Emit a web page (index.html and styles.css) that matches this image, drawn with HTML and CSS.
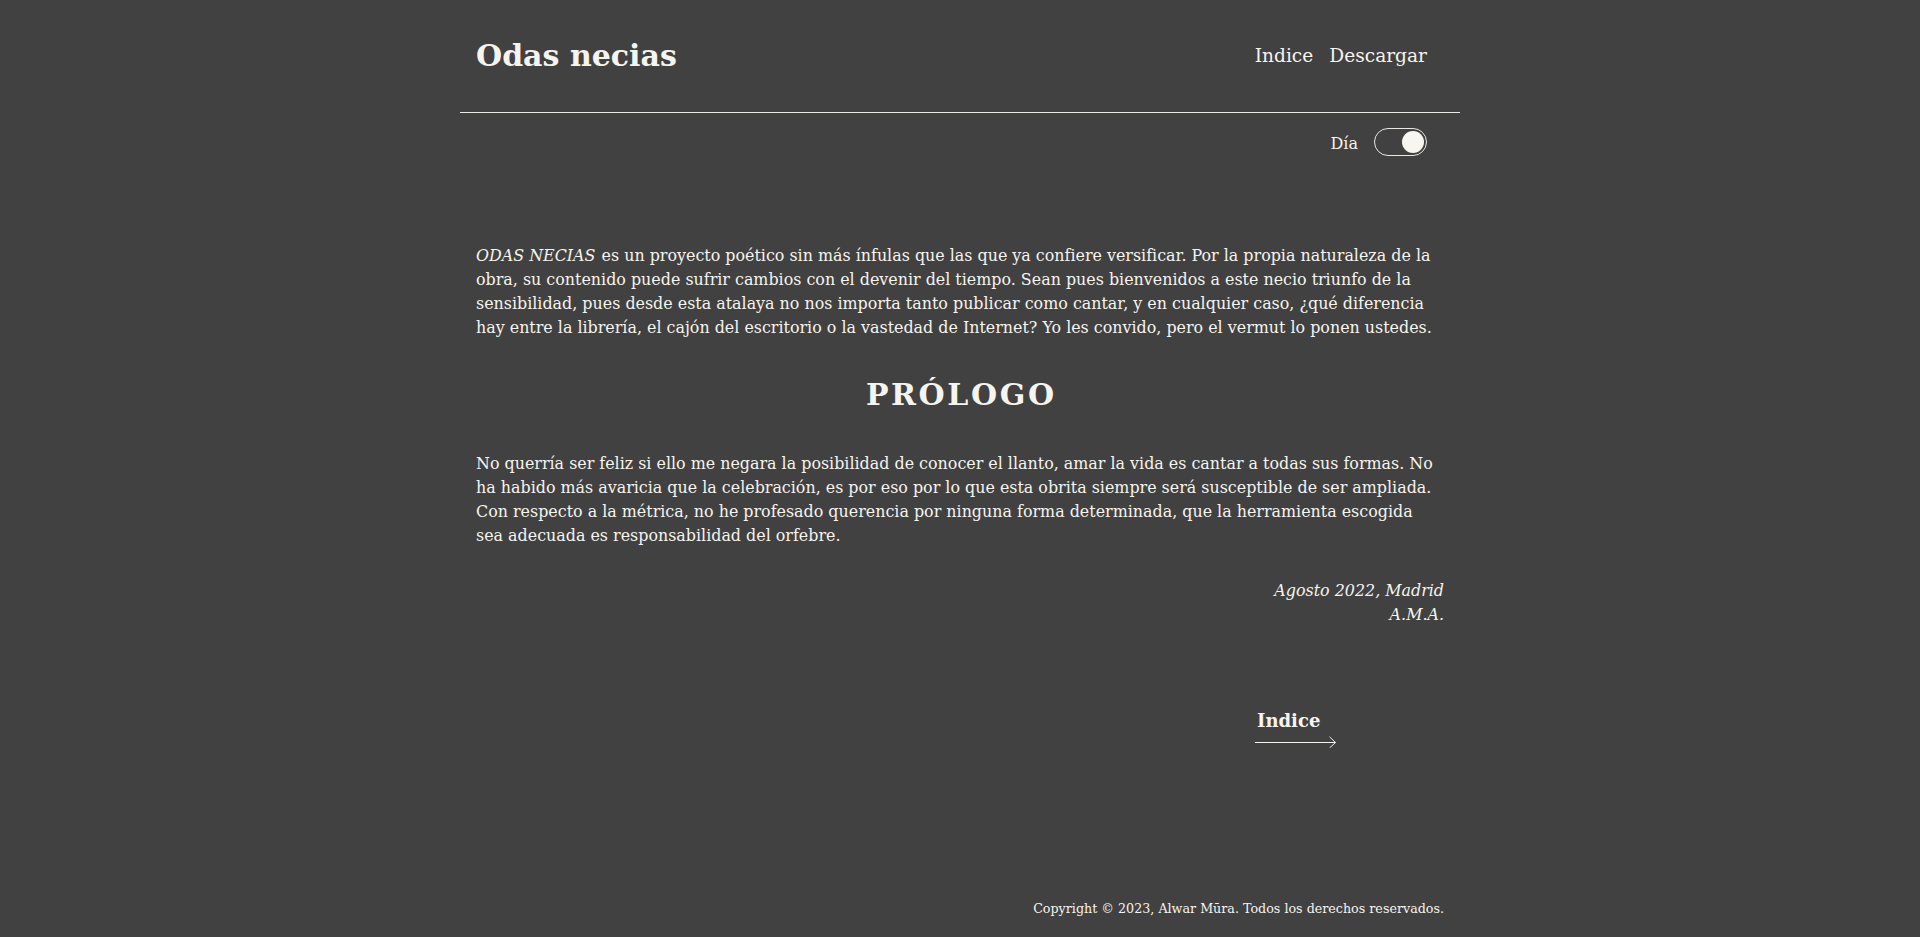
FILE: index.html
```html
<!DOCTYPE html>
<html lang="es">
<head>
<meta charset="utf-8">
<title>Odas necias</title>
<link rel="stylesheet" href="styles.css">
</head>
<body>
<div class="page">
  <header class="site-header">
    <h1 class="site-title">Odas necias</h1>
    <nav class="site-nav">
      <a href="#" class="nav-link">Indice</a>
      <a href="#" class="nav-link">Descargar</a>
    </nav>
  </header>
  <div class="theme-row">
    <span class="theme-label">Día</span>
    <span class="toggle"><span class="toggle-knob"></span></span>
  </div>
  <main class="content">
    <p class="intro"><em class="work-name">ODAS NECIAS</em> es un proyecto poético sin más ínfulas que las que ya confiere versificar. Por la propia naturaleza de la obra, su contenido puede sufrir cambios con el devenir del tiempo. Sean pues bienvenidos a este necio triunfo de la sensibilidad, pues desde esta atalaya no nos importa tanto publicar como cantar, y en cualquier caso, ¿qué diferencia hay entre la librería, el cajón del escritorio o la vastedad de Internet? Yo les convido, pero el vermut lo ponen ustedes.</p>
    <h2 class="section-title">PRÓLOGO</h2>
    <p class="prologue">No querría ser feliz si ello me negara la posibilidad de conocer el llanto, amar la vida es cantar a todas sus formas. No ha habido más avaricia que la celebración, es por eso por lo que esta obrita siempre será susceptible de ser ampliada. Con respecto a la métrica, no he profesado querencia por ninguna forma determinada, que la herramienta escogida sea adecuada es responsabilidad del orfebre.</p>
    <p class="signature">Agosto 2022, Madrid<br>A.M.A.</p>
    <div class="pager">
      <a href="#" class="next-link">
        <span class="next-text">Indice</span>
        <svg class="next-arrow" width="82" height="12" viewBox="0 0 82 12"><path d="M0 6.5 H80.5 M74.5 0.8 L80.5 6.5 L74.5 12" fill="none" stroke="#f4f2ec" stroke-width="1"/></svg>
      </a>
    </div>
  </main>
  <footer class="site-footer">Copyright © 2023, Alwar Mūra. Todos los derechos reservados.</footer>
</div>
</body>
</html>
```
FILE: styles.css
```css
html, body {
  margin: 0;
  padding: 0;
}
body {
  background: #414141;
  color: #f6f4ee;
  font-family: "DejaVu Serif", "Liberation Serif", serif;
}
.page {
  width: 1000px;
  margin: 0 auto;
  min-height: 100vh;
  display: flex;
  flex-direction: column;
}
.site-header {
  display: flex;
  justify-content: space-between;
  align-items: flex-start;
  height: 112px;
  padding: 0 33px 0 16px;
  border-bottom: 1px solid #ecebe6;
}
.site-title {
  margin: 38px 0 0;
  font-size: 30px;
  line-height: 36px;
  font-weight: bold;
}
.site-nav {
  display: flex;
  gap: 16px;
  margin-top: 44px;
}
.nav-link {
  color: #f6f4ee;
  text-decoration: none;
  font-size: 18.6px;
  line-height: 24px;
}
.theme-row {
  display: flex;
  justify-content: flex-end;
  align-items: center;
  gap: 16px;
  margin-top: 14px;
  padding-right: 33px;
}
.theme-label {
  font-size: 16px;
  line-height: 24px;
  padding-top: 5px;
}
.toggle {
  box-sizing: border-box;
  width: 53px;
  height: 28px;
  border: 1.5px solid #e9e8e3;
  border-radius: 14px;
  display: flex;
  align-items: center;
  justify-content: flex-end;
  padding-right: 2px;
}
.toggle-knob {
  width: 22px;
  height: 22px;
  border-radius: 50%;
  background: #f7f6f1;
}
.content {
  padding: 0 16px;
}
.intro, .prologue {
  margin: 0;
  font-size: 15.9px;
  line-height: 24px;
}
.intro {
  margin-top: 88px;
}
.work-name {
  padding-right: 1px;
}
.section-title {
  margin: 37px 0 0;
  text-align: center;
  font-size: 30px;
  line-height: 36px;
  font-weight: bold;
  letter-spacing: 2.6px;
  text-indent: 2.6px;
}
.prologue {
  margin-top: 39px;
}
.signature {
  margin: 31px 0 0;
  text-align: right;
  font-style: italic;
  font-size: 15.9px;
  line-height: 24px;
}
.pager {
  display: flex;
  justify-content: flex-end;
  margin-top: 82px;
  padding-right: 107px;
}
.next-link {
  display: flex;
  flex-direction: column;
  color: #f6f4ee;
  text-decoration: none;
}
.next-text {
  font-size: 18px;
  line-height: 24px;
  font-weight: bold;
  padding-left: 2px;
}
.next-arrow {
  display: block;
  margin-top: 3px;
}
.site-footer {
  margin-top: auto;
  padding: 0 16px 18px;
  text-align: right;
  font-size: 12.7px;
  line-height: 20px;
}
```
